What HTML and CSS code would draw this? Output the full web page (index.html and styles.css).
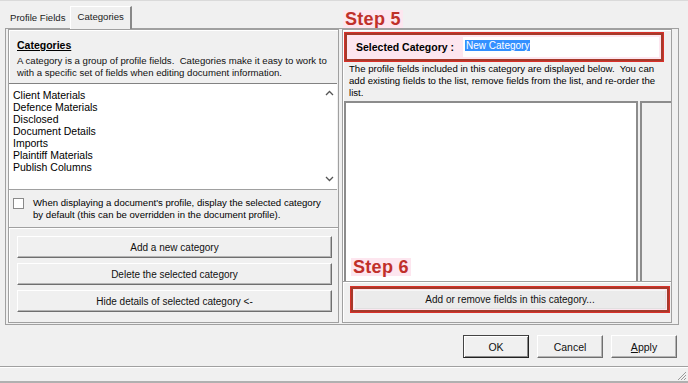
FILE: index.html
```html
<!DOCTYPE html>
<html>
<head>
<meta charset="utf-8">
<title>Profile Categories</title>
<link rel="stylesheet" href="styles.css">
</head>
<body>
<div class="dialog">
    <div class="tabbar">
        <div class="tabs">
            <span class="tab">Profile Fields</span>
            <span class="tab on">Categories</span>
        </div>
        <div class="step">Step 5</div>
    </div>

    <div class="tabpage">
        <div class="panel left">
            <div class="info">
                <div class="heading">Categories</div>
                <p>A category is a group of profile fields.&nbsp; Categories make it easy to work to with a specific set of fields when editing document information.</p>
            </div>
            <div class="listbox">
                <ul class="items">
                    <li>Client Materials</li>
                    <li>Defence Materials</li>
                    <li>Disclosed</li>
                    <li>Document Details</li>
                    <li>Imports</li>
                    <li>Plaintiff Materials</li>
                    <li>Publish Columns</li>
                </ul>
                <div class="scroll">
                    <svg width="9" height="6" viewBox="0 0 9 6"><polyline points="1,5 4.5,1.5 8,5" fill="none" stroke="#555" stroke-width="1.3"/></svg>
                    <svg width="9" height="6" viewBox="0 0 9 6"><polyline points="1,1 4.5,4.5 8,1" fill="none" stroke="#555" stroke-width="1.3"/></svg>
                </div>
            </div>
            <div class="checkrow">
                <span class="check"></span>
                <p>When displaying a document's profile, display the selected category by default (this can be overridden in the document profile).</p>
            </div>
            <div class="actions">
                <button class="btn">Add a new category</button>
                <button class="btn">Delete the selected category</button>
                <button class="btn">Hide details of selected category &lt;-</button>
            </div>
        </div>

        <div class="panel right">
            <div class="mark namerow">
                <b>Selected Category :</b>
                <span class="field"><span class="sel">New Category</span></span>
            </div>
            <p class="desc">The profile fields included in this category are displayed below.&nbsp; You can add existing fields to the list, remove fields from the list, and re-order the list.</p>
            <div class="fields">
                <div class="fieldlist">
                    <div class="step step6">Step 6</div>
                </div>
                <div class="side"></div>
            </div>
            <div class="addrow">
                <div class="mark addbox">
                    <button class="btn wide">Add or remove fields in this category...</button>
                </div>
            </div>
        </div>
    </div>

    <div class="footer">
        <button class="btn dlg default">OK</button>
        <button class="btn dlg">Cancel</button>
        <button class="btn dlg"><u>A</u>pply</button>
    </div>
    <div class="status">
        <svg class="grip" width="12" height="12" viewBox="0 0 12 12"><path d="M11 3 L3 11 M11 6 L6 11 M11 9 L9 11" stroke="#9a9a9a" stroke-width="1"/></svg>
    </div>
</div>
</body>
</html>
```

FILE: styles.css
```css
* { margin: 0; padding: 0; box-sizing: border-box;}
body { width: 688px; height: 383px; overflow: hidden; background: #f0f0f0; font: 10px "Liberation Sans", Arial, sans-serif; color: #000;}
p { line-height: 12px;}
ul { list-style: none;}

.dialog { height: 383px; display: flex; flex-direction: column; border-top: 1px solid #dadada;}

/* tabs + step 5 label */
.tabbar { height: 27px; display: grid; grid-template-columns: 337px 1fr; padding-left: 5px;}
.tabs { display: flex; align-items: flex-end;}
.tab { height: 20px; padding: 0 5px; line-height: 19px; font-size: 9.6px; color: #222;}
.tab.on { height: 23px; margin-left: 0; padding: 0 6px; line-height: 20px; border: 1px solid #fff; border-right: 2px solid #888; border-bottom: none; background: #f0f0f0; margin-bottom: -1px; position: relative; z-index: 2;}
.step { align-self: end; justify-self: start; margin-left: 1px; padding: 0 2px; background: #fde6ef; color: #c0302a; font: bold 18px "Liberation Sans", Arial, sans-serif; line-height: 18px; letter-spacing: 0.3px;}

.tabpage { height: 297px; margin: 0 9px 0 5px; border: 1px solid #a0a0a0; display: flex; gap: 3px; padding: 0 5px 1px 2px;}
.panel { border: 1px solid #a0a0a0; box-shadow: inset 1px 1px #fff; display: flex; flex-direction: column;}
.left { width: 331px;}
.right { width: 330px;}

/* left panel */
.info { height: 53px; padding: 9px 10px 0 8px;}
.heading { font-weight: bold; font-size: 10.5px; text-decoration: underline; line-height: 12px; margin-bottom: 4px;}
.info p { font-size: 9.6px; color: #111;}
.listbox { height: 107px; display: flex; background: #fff; border-top: 1px solid #828282; border-bottom: 1px solid #a0a0a0; margin-right: 1px;}
.items { flex: 1; padding: 5px 0 0 4px; font-size: 10.5px; line-height: 12px;}
.scroll { width: 16px; display: flex; flex-direction: column; justify-content: space-between; align-items: center; padding: 6px 0 7px; background: #fff;}
.checkrow { height: 38px; display: flex; gap: 9px; padding: 7px 8px 0 4px; border-bottom: 1px solid #a0a0a0;}
.check { width: 11px; height: 11px; flex: none; margin-top: 1px; border: 1px solid #8a8a8a; background: #fff;}
.checkrow p { font-size: 9.6px;}
.actions { flex: 1; display: flex; flex-direction: column; gap: 5px; padding: 7px 6px 0 8px; border-top: 1px solid #fff;}
.btn { font: 10px "Liberation Sans", Arial, sans-serif; color: #111; background: #f0f0f0; border: 1px solid; border-color: #fff #6f6f6f #6f6f6f #fff; box-shadow: inset -1px -1px #b4b4b4;}
.actions .btn { height: 22px;}

/* right panel */
.mark { border: 2px solid #a63a2a; box-shadow: 0 0 0 1px #d8302a; background: #fde6ef;}
.namerow { height: 28px; margin: 3px 8px 0 2px; display: flex; align-items: center; gap: 9px; padding-left: 9px;}
.namerow b { font-size: 10.5px;}
.field { flex: 1; height: 20px; margin-right: 2px; background: #fff; padding: 3px 2px 0;}
.sel { background: #3390ff; color: #fff; font-size: 10px; padding: 0 1px;}
.desc { height: 40px; padding: 2px 8px 0 6px; font-size: 9.6px;}
.fields { height: 181px; display: flex; border-bottom: 1px solid #a0a0a0;}
.fieldlist { width: 294px; margin-left: 1px; background: #fff; border-top: 2px solid #8c8c8c; border-left: 2px solid #8c8c8c; border-right: 2px solid #8c8c8c; display: flex; align-items: flex-end; padding: 0 0 5px 5px;}
.step6 { margin: 0;}
.side { flex: 1; border-top: 2px solid #8c8c8c; border-left: 2px solid #8c8c8c; margin-left: 2px;}
.addrow { flex: 1; border-top: 1px solid #fff; padding: 4px 2px 0 8px;}
.addbox { height: 25px; padding: 1px;}
.btn.wide { width: 100%; height: 19px; background: #ebebeb; border-color: #f6f6f6 #e0e0e0 #e0e0e0 #f6f6f6; box-shadow: none;}

/* bottom buttons */
.footer { height: 42px; display: flex; justify-content: flex-end; gap: 8px; padding: 10px 11px 0 0; border-bottom: 1px solid #a0a0a0;}
.btn.dlg { width: 66px; height: 23px; font-size: 10.5px;}
.btn.default { border-color: #444 #222 #222 #444; box-shadow: inset 1px 1px #fff, inset -1px -1px #8a8a8a;}
.status { flex: 1; border-top: 1px solid #fff; border-bottom: 2px solid #b0b0b0; display: flex; justify-content: flex-end; align-items: flex-end;}
.grip { margin: 0 1px 0 0;}
```
